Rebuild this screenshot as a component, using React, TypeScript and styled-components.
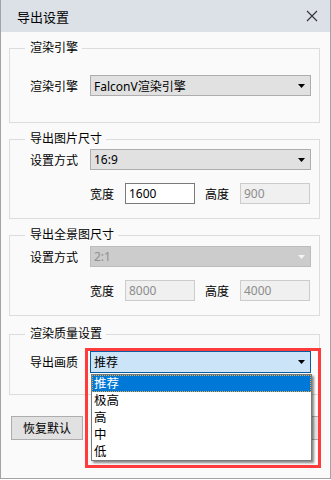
import React from "react";
import styled, { createGlobalStyle } from "styled-components";

const GlobalStyle = createGlobalStyle`
	html, body {
		margin: 0;
		padding: 0;
		background: #ffffff;
	}
	body {
		font-family: "Noto Sans", "Noto Sans CJK SC", sans-serif;
		font-size: 12px;
		color: #000000;
	}
`;

const Window = styled.div`
	position: relative;
	width: 331px;
	height: 479px;
	box-sizing: border-box;
	border: 1px solid #a3a3a3;
	border-top: none;
	background: #fafafa;
`;

const TitleBar = styled.div`
	height: 32px;
	display: flex;
	align-items: center;
	justify-content: space-between;
	padding: 0 12px 0 16px;
	background: #dce0e7;
	font-size: 13px;
`;

const Group = styled.fieldset<{ $mt: number; $pb: number }>`
	margin: ${(p) => p.$mt}px 10px 0 8px;
	padding: 0 0 ${(p) => p.$pb}px 0;
	border: 1px solid #dcdcdc;
	min-width: 0;
`;

const Legend = styled.legend`
	margin-left: 15px;
	padding: 0 4px 0 5px;
	line-height: 16px;
	font-size: 12px;
`;

const Row = styled.div<{ $mt: number; $pl?: number }>`
	display: flex;
	align-items: center;
	margin-top: ${(p) => p.$mt}px;
	padding-left: ${(p) => p.$pl ?? 20}px;
`;

const Label = styled.span<{ $w: number; $pl?: number }>`
	width: ${(p) => p.$w}px;
	padding-left: ${(p) => p.$pl ?? 0}px;
	box-sizing: border-box;
	flex: none;
	white-space: nowrap;
`;

type SelectState = "normal" | "disabled" | "active";

const SelectBox = styled.div<{ $state: SelectState }>`
	position: relative;
	width: 221px;
	height: ${(p) => (p.$state === "active" ? 22 : 21)}px;
	box-sizing: border-box;
	display: flex;
	align-items: center;
	justify-content: space-between;
	padding: 0 5px 0 3px;
	border: 1px solid
		${(p) => (p.$state === "active" ? "#0b5a9e" : p.$state === "disabled" ? "#bcbcbc" : "#adadad")};
	background: ${(p) => (p.$state === "active" ? "#cce4f7" : p.$state === "disabled" ? "#cccccc" : "#e1e1e1")};
	color: ${(p) => (p.$state === "disabled" ? "#8f8f8f" : "#000000")};
`;

const Input = styled.div<{ $disabled?: boolean }>`
	width: 70px;
	height: 21px;
	box-sizing: border-box;
	display: flex;
	align-items: center;
	padding-left: 3px;
	border: 1px solid ${(p) => (p.$disabled ? "#cccccc" : "#7a7a7a")};
	background: ${(p) => (p.$disabled ? "#f0f0f0" : "#ffffff")};
	color: ${(p) => (p.$disabled ? "#8c8c8c" : "#000000")};
`;

const DropList = styled.div`
	position: absolute;
	left: 0;
	top: 22px;
	width: 221px;
	box-sizing: border-box;
	border: 1px solid #7a7a7a;
	background: #ffffff;
	box-shadow: 2px 2px 2px rgba(0, 0, 0, 0.45);
	z-index: 2;
`;

const DropItem = styled.div<{ $selected?: boolean }>`
	height: 17px;
	line-height: 17px;
	box-sizing: border-box;
	padding-left: 2px;
	font-size: 12.5px;
	background: ${(p) => (p.$selected ? "#0078d7" : "transparent")};
	color: ${(p) => (p.$selected ? "#ffffff" : "#000000")};
	outline: ${(p) => (p.$selected ? "1px dotted #e9a541" : "none")};
	outline-offset: -1px;
`;

const Highlight = styled.div`
	position: absolute;
	left: -6px;
	top: -4px;
	width: 236px;
	height: 120px;
	box-sizing: border-box;
	border: 3px solid #ff3b3b;
	pointer-events: none;
	z-index: 3;
`;

const Footer = styled.div`
	display: flex;
	justify-content: space-between;
	margin-top: 21px;
	padding: 0 10px;
`;

const ButtonGroup = styled.div`
	display: flex;
	gap: 5px;
`;

const Button = styled.div`
	width: 72px;
	height: 24px;
	box-sizing: border-box;
	display: flex;
	align-items: center;
	justify-content: center;
	border: 1px solid #adadad;
	background: #e1e1e1;
`;

const Arrow = ({ color = "#000000" }: { color?: string }) => (
	<svg width="7" height="4" viewBox="0 0 7 4">
		<path d="M0 0 H7 L3.5 4 Z" fill={color} />
	</svg>
);

const CloseIcon = () => (
	<svg width="12" height="12" viewBox="0 0 12 12">
		<path d="M1 1 L11 11 M11 1 L1 11" stroke="#333333" strokeWidth="1.1" />
	</svg>
);

const Select = ({ value, state = "normal", children }: { value: string; state?: SelectState; children?: React.ReactNode }) => (
	<SelectBox $state={state}>
		<span>{value}</span>
		<Arrow color={state === "disabled" ? "#f4f4f4" : "#000000"} />
		{children}
	</SelectBox>
);

const quality = ["推荐", "极高", "高", "中", "低"];

export default function App() {
	return (
		<>
			<GlobalStyle />
			<Window>
				<TitleBar>
					<span>导出设置</span>
					<CloseIcon />
				</TitleBar>

				<Group $mt={8} $pb={26}>
					<Legend>渲染引擎</Legend>
					<Row $mt={19}>
						<Label $w={60}>渲染引擎</Label>
						<Select value="FalconV渲染引擎" />
					</Row>
				</Group>

				<Group $mt={8} $pb={14}>
					<Legend>导出图片尺寸</Legend>
					<Row $mt={2}>
						<Label $w={60}>设置方式</Label>
						<Select value="16:9" />
					</Row>
					<Row $mt={13} $pl={80}>
						<Label $w={35}>宽度</Label>
						<Input>1600</Input>
						<Label $w={45} $pl={10}>高度</Label>
						<Input $disabled>900</Input>
					</Row>
				</Group>

				<Group $mt={8} $pb={14}>
					<Legend>导出全景图尺寸</Legend>
					<Row $mt={3}>
						<Label $w={60}>设置方式</Label>
						<Select value="2:1" state="disabled" />
					</Row>
					<Row $mt={13} $pl={80}>
						<Label $w={35}>宽度</Label>
						<Input $disabled>8000</Input>
						<Label $w={45} $pl={10}>高度</Label>
						<Input $disabled>4000</Input>
					</Row>
				</Group>

				<Group $mt={10} $pb={21}>
					<Legend>渲染质量设置</Legend>
					<Row $mt={9}>
						<Label $w={60}>导出画质</Label>
						<Select value="推荐" state="active">
							<DropList>
								{quality.map((q, i) => (
									<DropItem key={q} $selected={i === 0}>
										{q}
									</DropItem>
								))}
							</DropList>
							<Highlight />
						</Select>
					</Row>
				</Group>

				<Footer>
					<Button>恢复默认</Button>
					<ButtonGroup>
						<Button>导出</Button>
						<Button>取消</Button>
					</ButtonGroup>
				</Footer>
			</Window>
		</>
	);
}
